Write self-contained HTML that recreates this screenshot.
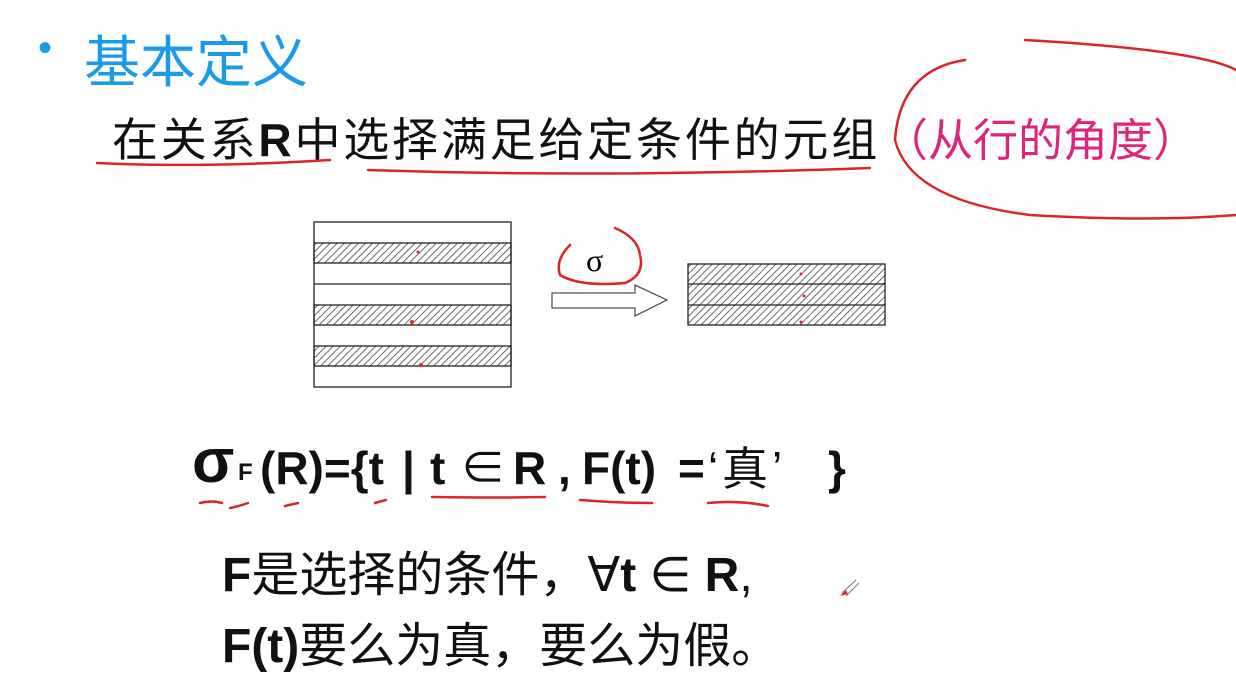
<!DOCTYPE html>
<html><head><meta charset="utf-8"><style>
body{margin:0;width:1236px;height:678px;background:#fff;position:relative;overflow:hidden;font-family:"Liberation Sans","Noto Sans CJK SC",sans-serif;}
.t{position:absolute;white-space:nowrap;}
.f{position:absolute;white-space:nowrap;top:440px;height:56px;line-height:56px;font-size:46px;font-weight:bold;color:#111;}
</style></head><body>
<div class="t" style="left:38px;top:26px;font-size:40px;color:#1a9be8;">•</div>
<div class="t" style="left:84px;top:18px;font-size:56px;color:#1a9be8;font-family:'Noto Sans CJK SC',sans-serif;">基本定义</div>
<div class="t" style="left:112px;top:104px;font-size:46px;color:#111;font-family:'Noto Sans CJK SC',sans-serif;letter-spacing:2.8px;">在关系<b style="font-family:'Liberation Sans'">R</b>中选择满足给定条件的元组</div>
<div class="t" style="left:883px;top:104px;font-size:45px;color:#e0247a;font-family:'Noto Sans CJK SC',sans-serif;">（从行的角度）</div>

<svg style="position:absolute;left:0;top:0" width="1236" height="678">
<defs><pattern id="h" width="5" height="5" patternUnits="userSpaceOnUse" patternTransform="rotate(45)"><line x1="0" y1="0" x2="0" y2="5" stroke="#444" stroke-width="1.6"/></pattern></defs>
<g stroke="#222" stroke-width="1.3" fill="#fff">
<rect x="314" y="222" width="197" height="165"/>
<rect x="314" y="243" width="197" height="20" fill="url(#h)"/>
<line x1="314" y1="284" x2="511" y2="284"/>
<rect x="314" y="305" width="197" height="20" fill="url(#h)"/>
<rect x="314" y="346" width="197" height="20" fill="url(#h)"/>
<rect x="688" y="264" width="197" height="61" fill="url(#h)"/>
<line x1="688" y1="284" x2="885" y2="284"/><line x1="688" y1="305" x2="885" y2="305"/>
<path d="M552 293 H635 V285 L667 300 L635 316 V308 H552 Z" stroke="#555"/>
</g>
<text x="586" y="271" font-family="Liberation Serif" font-size="32">σ</text>
<g fill="none" stroke="#d8262a" stroke-width="2.5" stroke-linecap="round">
<path d="M97 163 Q200 168 330 160"/>
<path d="M368 170 Q600 178 870 168"/>
<path d="M1025 40 Q1200 50 1236 70 M1236 215 Q1150 222 1030 215 Q910 200 895 140 Q900 70 965 60"/>
<path d="M570 245 Q555 260 560 275 Q580 287 625 283 Q645 275 640 255 Q638 238 615 228"/>
<path d="M200 503 Q212 500 222 503 M230 508 Q240 506 248 503 M285 506 L298 503 M375 503 L386 500 M432 497 Q500 498 545 497 M580 500 Q620 503 652 503 M708 503 Q740 500 768 506"/>
</g>
<g fill="#d8262a"><circle cx="418" cy="252" r="1.5"/><circle cx="412" cy="322" r="2"/><circle cx="421" cy="365" r="2"/><circle cx="801" cy="274" r="1.5"/><circle cx="804" cy="296" r="1.5"/><circle cx="801" cy="322" r="1.5"/></g>
<path d="M842 593 L856 580 M846 596 L859 583" stroke="#777" stroke-width="1"/><path d="M840 596 L846 590 L848 594 Z" fill="#d8262a"/>
</svg>

<div class="f" style="left:192px;top:432px;font-size:62px;line-height:60px;">σ</div>
<div class="f" style="left:238px;top:458px;font-size:24px;line-height:30px;">F</div>
<div class="f" style="left:260px;">(R)={t</div>
<div class="f" style="left:402px;">|</div>
<div class="f" style="left:430px;">t</div>
<div class="f" style="left:460px;font-weight:normal;">∈</div>
<div class="f" style="left:513px;">R</div>
<div class="f" style="left:558px;">,</div>
<div class="f" style="left:582px;">F(t)</div>
<div class="f" style="left:678px;">=</div>
<div class="f" style="left:708px;font-weight:normal;">‘</div>
<div class="f" style="left:722px;top:438px;font-weight:normal;font-family:'Noto Sans CJK SC',sans-serif;">真</div>
<div class="f" style="left:772px;font-weight:normal;">’</div>
<div class="f" style="left:828px;">}</div>
<div class="t" style="left:222px;top:535px;font-size:48px;color:#111;font-family:'Noto Sans CJK SC',sans-serif;"><b style="font-family:'Liberation Sans'">F</b>是选择的条件，<span style="font-family:'Liberation Sans'">∀<b>t</b> ∈ <b>R</b>,</span></div>
<div class="t" style="left:222px;top:606px;font-size:48px;color:#111;font-family:'Noto Sans CJK SC',sans-serif;"><b style="font-family:'Liberation Sans'">F(t)</b>要么为真，要么为假。</div>
</body></html>
